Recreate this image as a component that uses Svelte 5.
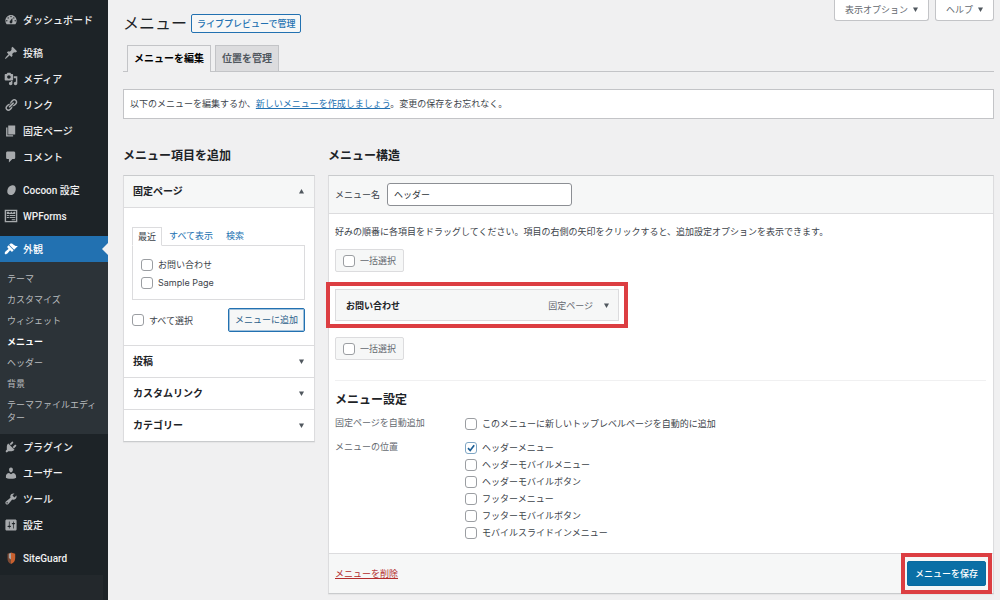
<script lang="ts">
	type NavItem = {
		label: string;
		icon: string;
		gap?: boolean;
		current?: boolean;
	};

	// 20x20 glyph paths for the admin menu.
	const icons: Record<string, string> = {
		dashboard:
			'M3.76 16h12.48c1.1-1.37 1.76-3.11 1.76-5 0-4.42-3.58-8-8-8s-8 3.58-8 8c0 1.89.66 3.63 1.76 5zM10 4c.55 0 1 .45 1 1s-.45 1-1 1-1-.45-1-1 .45-1 1-1zM6 6c.55 0 1 .45 1 1s-.45 1-1 1-1-.45-1-1 .45-1 1-1zm8 0c.55 0 1 .45 1 1s-.45 1-1 1-1-.45-1-1 .45-1 1-1zm-5.37 5.55L12 7v6c0 1.1-.9 2-2 2s-2-.9-2-2c0-.57.24-1.08.63-1.45zM4 10c.55 0 1 .45 1 1s-.45 1-1 1-1-.45-1-1 .45-1 1-1zm12 0c.55 0 1 .45 1 1s-.45 1-1 1-1-.45-1-1 .45-1 1-1z',
		pin: 'M10.44 3.02l1.82-1.82 6.36 6.35-1.83 1.82c-1.05-.68-2.48-.57-3.41.36l-.75.75c-.92.93-1.04 2.35-.35 3.41l-1.83 1.82-2.41-2.41-2.8 2.79c-.42.42-3.38 2.71-3.8 2.29s1.86-3.39 2.28-3.81l2.79-2.79L4.1 9.36l1.83-1.82c1.05.69 2.48.57 3.4-.36l.75-.75c.93-.92 1.05-2.35.36-3.41z',
		media:
			'M13 11V4c0-.55-.45-1-1-1h-1.67L9 1H5L3.67 3H2c-.55 0-1 .45-1 1v7c0 .55.45 1 1 1h10c.55 0 1-.45 1-1zM7 4.5c1.38 0 2.5 1.12 2.5 2.5S8.38 9.5 7 9.5 4.5 8.38 4.5 7 5.62 4.5 7 4.5zM14 6h5v10.5c0 1.38-1.12 2.5-2.5 2.5S14 17.88 14 16.5s1.12-2.5 2.5-2.5c.17 0 .34.02.5.05V9h-3V6zm-4 8.05V13h2v3.5c0 1.38-1.12 2.5-2.5 2.5S7 17.88 7 16.5 8.12 14 9.5 14c.17 0 .34.02.5.05z',
		link: 'M17.74 2.76c1.68 1.69 1.68 4.41 0 6.1l-1.53 1.52c-1.12 1.12-2.7 1.47-4.14 1.09l2.62-2.61.76-.77.76-.76c.84-.84.84-2.2 0-3.04-.84-.85-2.2-.85-3.04 0l-.77.76-3.38 3.38c-.37-1.44-.02-3.02 1.1-4.14l1.52-1.53c1.69-1.68 4.42-1.68 6.1 0zM8.59 13.43l5.34-5.34c.42-.42.42-1.1 0-1.52-.44-.43-1.13-.39-1.53 0l-5.33 5.34c-.42.42-.42 1.1 0 1.52.44.43 1.13.39 1.52 0zm-.76 2.29l4.14-4.15c.38 1.44.03 3.02-1.09 4.14l-1.52 1.53c-1.69 1.68-4.41 1.68-6.1 0-1.68-1.68-1.68-4.42 0-6.1l1.53-1.52c1.12-1.12 2.7-1.47 4.14-1.1l-4.14 4.15c-.85.84-.85 2.2 0 3.05.84.84 2.2.84 3.04 0z',
		page: 'M6 15V2h10v13H6zm-1 1h8v2H3V5h2v11z',
		comment:
			'M5 2h9c1.1 0 2 .9 2 2v7c0 1.1-.9 2-2 2h-2l-5 5v-5H5c-1.1 0-2-.9-2-2V4c0-1.1.9-2 2-2z',
		cocoon:
			'M11.5 3.2c3.8-.6 5.7 2 5.3 5.6-.4 4.2-2.8 8.2-6.8 8.4-3.8.2-5.7-2.6-5.3-6.200.4-3.900 3-7.200 6.800-7.800z',
		forms: 'M1 1h18v18H1V1zm2 2v14h14V3H3zm1 1h3l1.5 2L10 4h1l1.5 2L14 4h2v3H4V4zm0 4.5h3V10H4V8.5zm4 0h8V10H8V8.5zM4 11.5h3V13H4v-1.5zm4 0h8V13H8v-1.5zm3 3h5V16h-5v-1.5z',
		brush:
			'M14.48 11.06L7.41 3.99l1.5-1.5c.5-.56 2.3-.47 3.51.32 1.21.8 1.43 1.28 2.91 2.1 1.18.64 2.45 1.26 4.45.85zm-.71.71L6.7 4.7 4.93 6.47c-.39.39-.39 1.02 0 1.41l1.06 1.06c.39.39.39 1.03 0 1.42-.6.6-1.43 1.11-2.21 1.69-.35.26-.7.53-1.01.84C1.43 14.23.4 16.08 1.4 17.07c.99 1 2.84-.03 4.18-1.36.31-.31.58-.66.85-1.02.57-.78 1.08-1.61 1.69-2.21.39-.39 1.02-.39 1.41 0l1.06 1.06c.39.39 1.02.39 1.41 0z',
		plug: 'M13.11 4.36L9.87 7.6 8 5.73l3.24-3.24c.35-.34 1.05-.2 1.56.32.52.51.66 1.21.31 1.55zm-8 1.77l.91-1.12 9.01 9.01-1.19.84c-.71.71-2.63 1.16-3.82 1.16H6.14L4.9 17.26c-.59.59-1.54.59-2.12 0-.59-.58-.59-1.53 0-2.12l1.24-1.24v-3.88c0-1.13.4-3.19 1.09-3.89zm7.26 3.97l3.24-3.24c.34-.35 1.04-.21 1.55.31.52.51.66 1.21.31 1.55l-3.24 3.25z',
		user: 'M10 9.25c-2.27 0-2.73-3.44-2.73-3.44C7 4.02 7.82 2 9.97 2c2.16 0 2.98 2.02 2.71 3.81 0 0-.41 3.44-2.68 3.44zm0 2.57L12.72 10c2.39 0 4.52 2.33 4.52 4.53v2.49s-3.65 1.13-7.24 1.13c-3.65 0-7.24-1.13-7.24-1.13v-2.49c0-2.25 1.94-4.48 4.47-4.48z',
		wrench:
			'M16.68 9.77c-1.34 1.34-3.3 1.67-4.95.99l-5.41 6.52c-.99.99-2.59.99-3.58 0s-.99-2.59 0-3.57l6.52-5.42c-.68-1.65-.35-3.61.99-4.95 1.28-1.28 3.12-1.62 4.72-1.06l-2.89 2.89 2.82 2.82 2.86-2.87c.53 1.58.18 3.39-1.08 4.65zM3.81 16.21c.4.39 1.04.39 1.43 0 .4-.4.4-1.04 0-1.43-.39-.4-1.03-.4-1.43 0-.39.39-.39 1.03 0 1.43z',
		sliders:
			'M18 16V4c0-1.1-.9-2-2-2H4c-1.1 0-2 .9-2 2v12c0 1.1.9 2 2 2h12c1.1 0 2-.9 2-2zM8 11h1c.55 0 1 .45 1 1s-.45 1-1 1H8v1.5c0 .28-.22.5-.5.5s-.5-.22-.5-.5V13H6c-.55 0-1-.45-1-1s.45-1 1-1h1V5.5c0-.28.22-.5.5-.5s.5.22.5.5V11zm5-2h-1c-.55 0-1-.45-1-1s.45-1 1-1h1V5.5c0-.28.22-.5.5-.5s.5.22.5.5V7h1c.55 0 1 .45 1 1s-.45 1-1 1h-1v5.5c0 .28-.22.5-.5.5s-.5-.22-.5-.5V9z'
	};

	const nav: NavItem[] = [
		{ label: 'ダッシュボード', icon: 'dashboard' },
		{ label: '投稿', icon: 'pin', gap: true },
		{ label: 'メディア', icon: 'media' },
		{ label: 'リンク', icon: 'link' },
		{ label: '固定ページ', icon: 'page' },
		{ label: 'コメント', icon: 'comment' },
		{ label: 'Cocoon 設定', icon: 'cocoon', gap: true },
		{ label: 'WPForms', icon: 'forms' },
		{ label: '外観', icon: 'brush', gap: true, current: true },
		{ label: 'プラグイン', icon: 'plug' },
		{ label: 'ユーザー', icon: 'user' },
		{ label: 'ツール', icon: 'wrench' },
		{ label: '設定', icon: 'sliders' },
		{ label: 'SiteGuard', icon: 'shield', gap: true }
	];

	const submenu = [
		'テーマ',
		'カスタマイズ',
		'ウィジェット',
		'メニュー',
		'ヘッダー',
		'背景',
		'テーマファイルエディター'
	];

	const closedSections = ['投稿', 'カスタムリンク', 'カテゴリー'];

	let menuName = $state('ヘッダー');
	let autoAdd = $state(false);
	let pages = $state([
		{ label: 'お問い合わせ', checked: false },
		{ label: 'Sample Page', checked: false }
	]);
	let locations = $state([
		{ label: 'ヘッダーメニュー', checked: true },
		{ label: 'ヘッダーモバイルメニュー', checked: false },
		{ label: 'ヘッダーモバイルボタン', checked: false },
		{ label: 'フッターメニュー', checked: false },
		{ label: 'フッターモバイルボタン', checked: false },
		{ label: 'モバイルスライドインメニュー', checked: false }
	]);
</script>

{#snippet arrow(up = false)}
	<svg class="arrow" class:up viewBox="0 0 6 6" aria-hidden="true"><path d="M0 .5h6L3 6z" /></svg>
{/snippet}

<div class="admin">
	<nav class="sidebar">
		<ul>
			{#each nav as item (item.label)}
				<li class:gap={item.gap}>
					<a href="#top" class="top" class:current={item.current}>
						<svg class="icon" viewBox="0 0 20 20" aria-hidden="true">
							{#if item.icon === 'shield'}
								<path d="M10 2l6 2v6c0 4-2 7-6 8.5z" fill="#c8602e" />
								<path d="M10 2L5 4v6c0 4 1 7 5 8.5z" fill="#7d4a35" />
								<path d="M7 4l3-1v9l-3-2z" fill="#a9a5a3" />
							{:else}
								<path d={icons[item.icon]} fill-rule={item.icon === 'forms' ? 'evenodd' : 'nonzero'} />
							{/if}
						</svg>
						{item.label}
					</a>
					{#if item.current}
						<ul class="submenu">
							{#each submenu as sub (sub)}
								<li><a href="#top" class:active={sub === 'メニュー'}>{sub}</a></li>
							{/each}
						</ul>
					{/if}
				</li>
			{/each}
		</ul>
		<div class="collapse"></div>
	</nav>

	<main>
		<header>
			<div class="title">
				<h1>メニュー</h1>
				<a class="btn outline" href="#top">ライブプレビューで管理</a>
			</div>
			<div class="screen-meta">
				<button>表示オプション {@render arrow()}</button>
				<button>ヘルプ {@render arrow()}</button>
			</div>
		</header>

		<div class="tabs">
			<a href="#top" class="tab selected">メニューを編集</a>
			<a href="#top" class="tab">位置を管理</a>
		</div>

		<p class="notice">
			以下のメニューを編集するか、<a href="#top">新しいメニューを作成しましょう</a>。変更の保存をお忘れなく。
		</p>

		<div class="columns">
			<section>
				<h2>メニュー項目を追加</h2>
				<div class="box">
					<button class="section-head open">固定ページ {@render arrow(true)}</button>
					<div class="section-body">
						<div class="page-tabs">
							<a href="#top" class="on">最近</a>
							<a href="#top">すべて表示</a>
							<a href="#top">検索</a>
						</div>
						<div class="page-list">
							{#each pages as page (page.label)}
								<label><input type="checkbox" bind:checked={page.checked} />{page.label}</label>
							{/each}
						</div>
						<div class="add-row">
							<label><input type="checkbox" />すべて選択</label>
							<button class="btn outline add">メニューに追加</button>
						</div>
					</div>
					{#each closedSections as name (name)}
						<button class="section-head">{name} {@render arrow()}</button>
					{/each}
				</div>
			</section>

			<section>
				<h2>メニュー構造</h2>
				<div class="box">
					<div class="menu-head">
						<label for="menu-name">メニュー名</label>
						<input id="menu-name" type="text" bind:value={menuName} />
					</div>
					<div class="menu-body">
						<p>
							好みの順番に各項目をドラッグしてください。項目の右側の矢印をクリックすると、追加設定オプションを表示できます。
						</p>
						<label class="bulk"><input type="checkbox" />一括選択</label>
						<div class="menu-item">
							<strong>お問い合わせ</strong>
							<span>固定ページ</span>
							{@render arrow()}
						</div>
						<label class="bulk"><input type="checkbox" />一括選択</label>

						<div class="settings">
							<h2>メニュー設定</h2>
							<fieldset>
								<legend>固定ページを自動追加</legend>
								<div>
									<label>
										<input type="checkbox" bind:checked={autoAdd} />このメニューに新しいトップレベルページを自動的に追加
									</label>
								</div>
							</fieldset>
							<fieldset>
								<legend>メニューの位置</legend>
								<div>
									{#each locations as loc (loc.label)}
										<label><input type="checkbox" bind:checked={loc.checked} />{loc.label}</label>
									{/each}
								</div>
							</fieldset>
						</div>
					</div>
					<div class="menu-foot">
						<a href="#top">メニューを削除</a>
						<div class="save"><button class="btn primary">メニューを保存</button></div>
					</div>
				</div>
			</section>
		</div>
	</main>
</div>

<style>
	:global(body) {
		background: #f0f0f1;
	}

	.admin {
		display: flex;
		min-height: 100vh;
		font-family: Inter, 'Noto Sans CJK JP', sans-serif;
		font-size: 9px;
		line-height: 13px;
		color: #3c434a;
	}
	.admin *,
	.admin *::after {
		box-sizing: border-box;
	}
	ul {
		list-style: none;
		margin: 0;
		padding: 0;
	}
	a {
		color: #2271b1;
	}
	button {
		font: inherit;
		color: inherit;
		cursor: pointer;
	}
	h1,
	h2 {
		margin: 0;
		color: #1d2327;
	}
	h1 {
		font-size: 16px;
		font-weight: 400;
		line-height: 20px;
	}
	h2 {
		font-size: 12px;
		font-weight: 600;
		line-height: 16px;
	}

	/* Sidebar */
	.sidebar {
		display: flex;
		flex-direction: column;
		flex: 0 0 108px;
		padding-top: 7px;
		background: #1d2327;
	}
	.gap {
		margin-top: 7px;
	}
	.top {
		position: relative;
		display: flex;
		align-items: center;
		gap: 5px;
		height: 26px;
		padding-left: 4px;
		font-family: Roboto, 'Noto Sans CJK JP', sans-serif;
		font-size: 10px;
		font-weight: 500;
		color: #f0f0f1;
		text-decoration: none;
		white-space: nowrap;
	}
	.icon {
		width: 14px;
		height: 14px;
		fill: #a7aaad;
	}
	.current {
		background: #2271b1;
		color: #fff;
	}
	.current .icon {
		fill: #fff;
	}
	.current::after {
		content: '';
		position: absolute;
		right: 0;
		top: 7px;
		border: 6px solid transparent;
		border-left-width: 0;
		border-right-color: #f0f0f1;
	}
	.submenu {
		padding: 6px 0;
		background: #2c3338;
	}
	.submenu a {
		display: block;
		padding: 4px 7px;
		color: #b9bcbf;
		text-decoration: none;
	}
	.submenu .active {
		color: #fff;
		font-weight: 600;
	}
	.collapse {
		flex: 1;
		margin: 4px 5px 0 0;
		background: #23282c;
	}

	/* Page head */
	main {
		flex: 1;
		min-width: 0;
		padding: 0 6px 7px 15px;
	}
	header {
		display: flex;
		justify-content: space-between;
		align-items: flex-start;
		height: 45px;
	}
	.title {
		display: flex;
		align-items: center;
		gap: 4px;
		padding-top: 13px;
	}
	.btn {
		border: 1px solid #2271b1;
		border-radius: 2px;
		padding: 0 5px;
		line-height: 17px;
		text-decoration: none;
		white-space: nowrap;
	}
	.outline {
		background: #f6f7f7;
		color: #2c5f8a;
	}
	.title .outline {
		color: #2271b1;
		font-weight: 500;
	}
	.screen-meta {
		display: flex;
		gap: 6px;
	}
	.screen-meta button {
		display: flex;
		align-items: center;
		gap: 5px;
		height: 21px;
		padding: 0 10px 2px;
		border: 1px solid #c3c4c7;
		border-top: 0;
		border-radius: 0 0 3px 3px;
		background: #fff;
		color: #646970;
	}
	.arrow {
		flex: none;
		width: 5px;
		height: 5px;
		fill: #50575e;
	}
	.up {
		rotate: 180deg;
	}
	.tabs {
		display: flex;
		gap: 4px;
		padding: 0 4px;
		border-bottom: 1px solid #c3c4c7;
	}
	.tab {
		padding: 3px 6px;
		border: 1px solid #c3c4c7;
		border-bottom: 0;
		background: #dcdcde;
		font-size: 10px;
		font-weight: 600;
		line-height: 19px;
		color: #50575e;
		text-decoration: none;
	}
	.selected {
		margin-bottom: -1px;
		background: #f0f0f1;
		color: #000;
	}
	.notice {
		margin: 17px 0 29px;
		padding: 7px 6px;
		border: 1px solid #c3c4c7;
		background: #fff;
		line-height: 14px;
	}

	/* Columns */
	.columns {
		display: grid;
		grid-template-columns: 192px minmax(0, 1fr);
		align-items: start;
		gap: 13px;
	}
	.box {
		margin-top: 11px;
		border: 1px solid #c3c4c7;
		border-color: #c9cbcd #dcdcde;
		background: #fff;
		box-shadow: 0 1px 1px #0000000a;
	}
	label {
		display: flex;
		align-items: center;
		gap: 5px;
	}
	input {
		font: inherit;
		color: #2c3338;
		border: 1px solid #8c8f94;
		background: #fff;
	}
	input[type='checkbox'] {
		appearance: none;
		flex: none;
		width: 12px;
		height: 12px;
		margin: 0;
		border-color: #9b9ea2;
		border-radius: 3px;
	}
	input[type='checkbox']:checked {
		border-color: #7fa6c4;
		background: #fff
			url("data:image/svg+xml,%3Csvg xmlns='http://www.w3.org/2000/svg' viewBox='0 0 10 10'%3E%3Cpath d='M2 5.2l2.2 2.3L8.2 2.2' fill='none' stroke='%231d5f96' stroke-width='1.7'/%3E%3C/svg%3E");
	}

	.section-head {
		display: flex;
		align-items: center;
		justify-content: space-between;
		width: 100%;
		height: 32px;
		padding: 0 10px 0 9px;
		border: 0;
		border-top: 1px solid #dcdcde;
		background: #fff;
		font-size: 10px;
		font-weight: 600;
		color: #1d2327;
	}
	.open {
		border-top: 0;
		border-bottom: 1px solid #dcdcde;
		background: #f6f7f7;
	}
	.section-body {
		padding: 19px 9px 13px 8px;
	}
	.page-tabs {
		display: flex;
		gap: 13px;
		line-height: 17px;
	}
	.page-tabs a {
		text-decoration: none;
	}
	.page-tabs .on {
		margin: 0 -6px -1px 0;
		padding: 0 5px;
		border: 1px solid #dcdcde;
		border-bottom-color: #fff;
		background: #fff;
		color: #3c434a;
	}
	.page-list {
		display: flex;
		flex-direction: column;
		gap: 5px;
		padding: 12px 8px 10px;
		border: 1px solid #dcdcde;
	}
	.add-row {
		display: flex;
		align-items: center;
		justify-content: space-between;
		margin-top: 8px;
	}
	.add {
		padding: 0 6px;
		line-height: 22px;
		box-shadow: 0 0 0 1px #2271b166 inset;
	}

	.menu-head {
		display: flex;
		align-items: center;
		gap: 7px;
		height: 38px;
		padding: 0 6px;
		border-bottom: 1px solid #dcdcde;
		background: #f6f7f7;
	}
	.menu-head input {
		width: 185px;
		height: 23px;
		padding: 0 6px;
		border-radius: 3px;
	}
	.menu-body {
		padding: 11px 7px 12px 6px;
	}
	.menu-body p {
		margin: 0 0 11px;
	}
	.bulk {
		width: fit-content;
		height: 23px;
		padding: 0 7px;
		border: 1px solid #dcdcde;
		border-radius: 2px;
		background: #f6f7f7;
		color: #646970;
	}
	.menu-item {
		position: relative;
		display: flex;
		align-items: center;
		gap: 11px;
		width: 284px;
		height: 32px;
		margin: 17px 0 16px;
		padding: 0 9px 0 10px;
		border: 1px solid #dcdcde;
		background: #f6f7f7;
	}
	.menu-item strong {
		flex: 1;
		font-weight: 600;
		color: #1d2327;
	}
	.menu-item span {
		color: #646970;
	}

	/* Red call-outs drawn over the menu item and the save button. */
	.menu-item::after,
	.save::after {
		content: '';
		position: absolute;
		inset: -8px -10px;
		border: 4px solid #dc3e42;
		pointer-events: none;
	}
	.save::after {
		inset: -8px -6px;
	}

	.settings {
		margin-top: 20px;
		padding-top: 11px;
		border-top: 1px solid #f0f0f1;
	}
	fieldset {
		display: grid;
		grid-template-columns: 130px 1fr;
		margin: 7px 0 0;
		padding: 0;
		border: 0;
	}
	legend {
		float: left;
		padding: 0;
		color: #646970;
		line-height: 16px;
	}
	fieldset label {
		height: 17px;
	}
	.menu-foot {
		display: flex;
		align-items: center;
		justify-content: space-between;
		height: 40px;
		padding: 0 7px 0 6px;
		border-top: 1px solid #dcdcde;
		background: #f6f7f7;
	}
	.menu-foot a {
		color: #b32d2e;
	}
	.save {
		position: relative;
		display: flex;
	}
	.primary {
		padding: 0 7px;
		border-color: #0a6a9f;
		background: #0a6fa6;
		line-height: 23px;
		font-weight: 500;
		color: #fff;
	}
</style>
